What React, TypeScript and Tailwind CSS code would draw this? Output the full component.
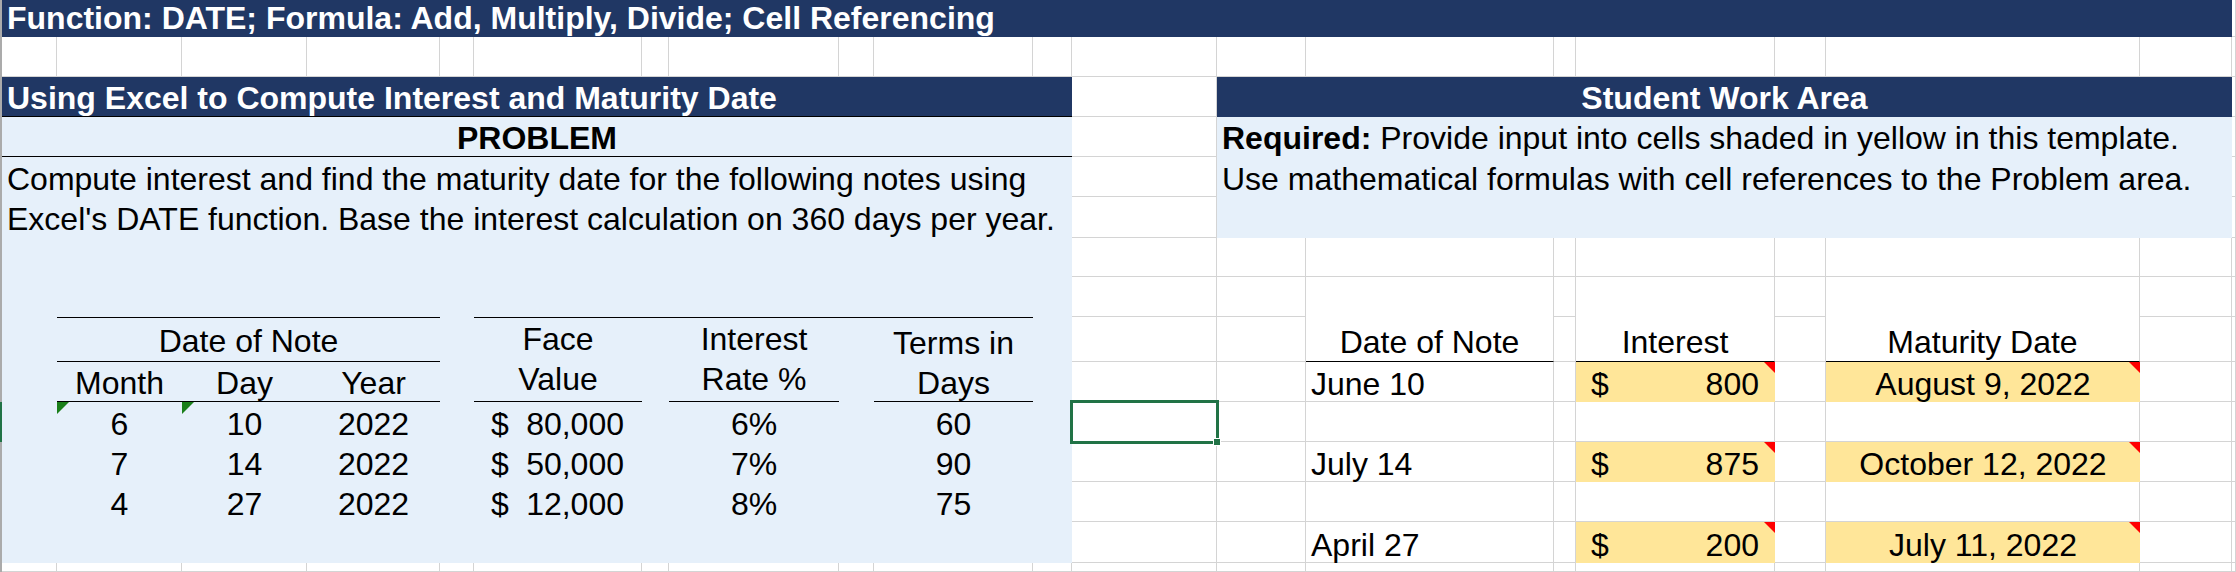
import React from 'react';

// column widths / row heights copied from the sheet (first col is the row-header edge)
const GRID =
  'grid grid-cols-[2px_55px_125px_125px_133px_34px_168px_27px_170px_35px_159px_39px_145px_89px_248px_22px_199px_51px_314px_92px_4px] grid-rows-[37px_40px_40px_40px_40px_41px_39px_40px_45px_40px_40px_40px_40px_41px_9px]';

const ROWS = 15;
const COLS = 21;

const GreenFlag = () => (
  <span className="absolute top-0 left-0 w-0 h-0 border-t-[12px] border-t-[#1a7f1a] border-r-[12px] border-r-transparent" />
);

const RedFlag = () => (
  <span className="absolute top-0 right-0 w-0 h-0 border-t-[11px] border-t-[#ff0000] border-l-[11px] border-l-transparent" />
);

const notes = [
  { row: 'row-start-11', month: '6', day: '10', year: '2022', face: '80,000', rate: '6%', days: '60', flag: true },
  { row: 'row-start-12', month: '7', day: '14', year: '2022', face: '50,000', rate: '7%', days: '90', flag: false },
  { row: 'row-start-13', month: '4', day: '27', year: '2022', face: '12,000', rate: '8%', days: '75', flag: false },
];

const answers = [
  { row: 'row-start-10', date: 'June 10', interest: '800', maturity: 'August 9, 2022' },
  { row: 'row-start-12', date: 'July 14', interest: '875', maturity: 'October 12, 2022' },
  { row: 'row-start-14', date: 'April 27', interest: '200', maturity: 'July 11, 2022' },
];

const App = () => {
  return (
    <div className="grid w-[2236px] h-[572px] overflow-hidden bg-white text-black text-[32px] leading-[36px] font-['Liberation_Sans',Arial,sans-serif]">
      {/* Gridlines */}
      <div className={`col-start-1 row-start-1 ${GRID}`}>
        {Array.from({ length: ROWS * COLS }).map((_, i) => {
          const r = Math.floor(i / COLS);
          const c = i % COLS;
          if (c === 0) return <div key={i} className={r === 10 ? 'bg-[#217346]' : 'bg-[#ababab]'} />;
          return <div key={i} className="border-r border-b border-[#d4d4d4]" />;
        })}
      </div>

      {/* Cells */}
      <div className={`col-start-1 row-start-1 ${GRID} whitespace-nowrap`}>
        <div className="col-start-2 col-span-19 row-start-1 flex items-end bg-[#203764] pl-[5px] pb-px font-bold text-white">
          Function: DATE; Formula: Add, Multiply, Divide; Cell Referencing
        </div>

        <div className="col-start-2 col-span-11 row-start-3 flex items-end bg-[#203764] pl-[5px] border-b border-black font-bold text-white">
          Using Excel to Compute Interest and Maturity Date
        </div>
        <div className="col-start-14 col-span-7 row-start-3 flex items-end justify-center bg-[#203764] pb-px font-bold text-white">
          Student Work Area
        </div>

        {/* Problem area */}
        <div className="col-start-2 col-span-11 row-start-4 row-span-11 bg-[#e6f0fa]" />
        <div className="col-start-2 col-span-11 row-start-4 flex items-end justify-center border-b border-black font-bold">
          PROBLEM
        </div>
        <div className="col-start-2 col-span-11 row-start-5 flex items-end pl-[5px]">
          Compute interest and find the maturity date for the following notes using
        </div>
        <div className="col-start-2 col-span-11 row-start-6 flex items-end pl-[5px] pb-px">
          Excel's DATE function. Base the interest calculation on 360 days per year.
        </div>

        {/* Student work area */}
        <div className="col-start-14 col-span-7 row-start-4 row-span-3 flex flex-col bg-[#e6f0fa] pl-[5px]">
          <div className="h-[40px] flex items-end pb-px">
            <span>
              <span className="font-bold">Required:</span> Provide input into cells shaded in yellow in this template.
            </span>
          </div>
          <div className="h-[40px] flex items-end">
            Use mathematical formulas with cell references to the Problem area.
          </div>
        </div>

        {/* Problem table headers */}
        <div className="col-start-3 col-span-3 row-start-9 flex items-end justify-center border-t border-b border-black pb-[2px]">
          Date of Note
        </div>
        <div className="col-start-7 col-span-5 row-start-9 border-t border-black" />
        <div className="col-start-7 row-start-9 row-span-2 flex flex-col items-center justify-end gap-[4px] border-b border-black pb-[4px]">
          <div>Face</div>
          <div>Value</div>
        </div>
        <div className="col-start-9 row-start-9 row-span-2 flex flex-col items-center justify-end gap-[4px] border-b border-black pb-[4px]">
          <div>Interest</div>
          <div>Rate %</div>
        </div>
        <div className="col-start-11 row-start-9 row-span-2 flex flex-col items-center justify-end gap-[4px] border-b border-black">
          <div>Terms in</div>
          <div>Days</div>
        </div>
        <div className="col-start-3 row-start-10 flex items-end justify-center border-b border-black">Month</div>
        <div className="col-start-4 row-start-10 flex items-end justify-center border-b border-black">Day</div>
        <div className="col-start-5 row-start-10 flex items-end justify-center border-b border-black">Year</div>

        {notes.map((n) => (
          <React.Fragment key={n.row}>
            <div className={`col-start-3 ${n.row} relative flex items-end justify-center`}>
              {n.flag && <GreenFlag />}
              {n.month}
            </div>
            <div className={`col-start-4 ${n.row} relative flex items-end justify-center`}>
              {n.flag && <GreenFlag />}
              {n.day}
            </div>
            <div className={`col-start-5 ${n.row} flex items-end justify-center`}>{n.year}</div>
            <div className={`col-start-7 ${n.row} flex items-end justify-between pl-[17px] pr-[18px]`}>
              <span>$</span>
              <span>{n.face}</span>
            </div>
            <div className={`col-start-9 ${n.row} flex items-end justify-center`}>{n.rate}</div>
            <div className={`col-start-11 ${n.row} flex items-end justify-center`}>{n.days}</div>
          </React.Fragment>
        ))}

        {/* Student table headers */}
        <div className="col-start-15 row-start-8 row-span-2 flex items-end justify-center bg-white border-r border-r-[#d4d4d4] border-b border-b-black pb-px">
          Date of Note
        </div>
        <div className="col-start-17 row-start-8 row-span-2 flex items-end justify-center bg-white border-r border-r-[#d4d4d4] border-b border-b-black pb-px">
          Interest
        </div>
        <div className="col-start-19 row-start-8 row-span-2 flex items-end justify-center bg-white border-r border-r-[#d4d4d4] border-b border-b-black pb-px">
          Maturity Date
        </div>

        {answers.map((a) => (
          <React.Fragment key={a.row}>
            <div className={`col-start-15 ${a.row} flex items-end pl-[5px]`}>{a.date}</div>
            <div className={`col-start-17 ${a.row} relative flex items-end justify-between bg-[#ffe699] pl-[15px] pr-[16px]`}>
              <RedFlag />
              <span>$</span>
              <span>{a.interest}</span>
            </div>
            <div className={`col-start-19 ${a.row} relative flex items-end justify-center bg-[#ffe699]`}>
              <RedFlag />
              {a.maturity}
            </div>
          </React.Fragment>
        ))}

        {/* Active cell */}
        <div className="col-start-13 row-start-11 -m-[2px] relative border-[3px] border-[#217346]">
          <span className="absolute -right-[5px] -bottom-[5px] w-[8px] h-[8px] bg-[#217346] border border-white" />
        </div>
      </div>
    </div>
  );
};

export default App;
